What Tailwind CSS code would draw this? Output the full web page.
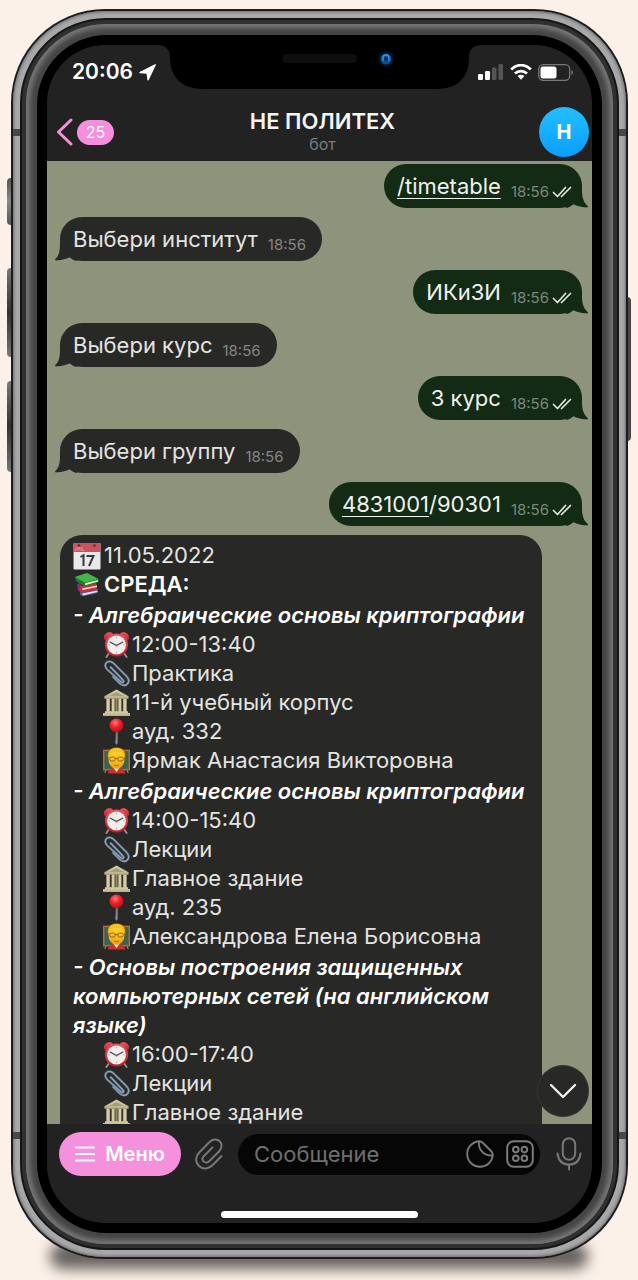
<!DOCTYPE html>
<html lang="ru">
<head>
<meta charset="utf-8">
<meta name="viewport" content="width=device-width, initial-scale=1">
<title>НЕ ПОЛИТЕХ</title>
<script src="https://cdn.jsdelivr.net/npm/@tailwindcss/browser@4"></script>
</head>
<body class="bg-[#fbf1e8] font-['Inter','Liberation_Sans',sans-serif]">

<!-- Shared glyphs -->
<svg class="absolute size-0" aria-hidden="true">
  <defs>
    <linearGradient id="redShade" x1="0" y1="0" x2="0" y2="1"><stop offset="0" stop-color="#f0555e"/><stop offset="1" stop-color="#b81f2c"/></linearGradient>
    <linearGradient id="stone" x1="0" y1="0" x2="0" y2="1"><stop offset="0" stop-color="#d9d0ab"/><stop offset="1" stop-color="#b9ae86"/></linearGradient>
    <radialGradient id="pinHead" cx="0.4" cy="0.3" r="0.7"><stop offset="0" stop-color="#ff7a74"/><stop offset="0.5" stop-color="#ee2228"/><stop offset="1" stop-color="#b50d16"/></radialGradient>
    <linearGradient id="face" x1="0" y1="0" x2="0" y2="1"><stop offset="0" stop-color="#ffd93a"/><stop offset="1" stop-color="#f2a30c"/></linearGradient>
  </defs>
  <symbol id="tailLeft" viewBox="0 0 22 22">
    <path d="M5 0V5C5 12 4 17 0 20.500C-.5 21.500 1 21.500 3 21.300C7 21 11 20 14.500 18.200C17 20 19 21.500 22 22V0Z"/>
  </symbol>
  <symbol id="tailRight" viewBox="0 0 22 22">
    <path d="M16 0V5C16 12 18 17 22 20.500C22.500 21.500 21 21.500 19 21.300C15 21 11 20 7.500 18.200C5 20 3 21.500 0 22V0Z"/>
  </symbol>
  <symbol id="checks" viewBox="0 0 20 12">
    <path d="M1.500 6.500L5.500 10.500L13.500 1.500M9.500 10.500L18.500 1.500" fill="none" stroke="currentColor" stroke-width="1.700" stroke-linecap="round" stroke-linejoin="round"/>
  </symbol>
  <symbol id="calendar" viewBox="0 0 28 28">
    <rect x="0.500" y="1" width="27" height="26.500" rx="1" fill="#e9e8ec"/>
    <path d="M.5 10V2A1 1 0 0 1 1.500 1H26.500A1 1 0 0 1 27.500 2V10Z" fill="#c5545d"/>
    <circle cx="6" cy="3.500" r="1.300" fill="#6e2a31"/><circle cx="21.500" cy="3.500" r="1.300" fill="#6e2a31"/>
    <path d="M3 5V8.500H2M5 8.500V5.500H7V8.500M9 5V8.500H11" fill="none" stroke="#e79aa0" stroke-width="0.900"/>
    <path d="M7.500 15L10.500 13.200V24M13.500 14H20.500L16 24" fill="none" stroke="#3b3b3f" stroke-width="2"/>
  </symbol>
  <symbol id="books" viewBox="0 0 28 28">
    <path d="M7 20L24 17.500L25 22L10 25.500L7 24Z" fill="#4a5a9c"/>
    <path d="M9 22.500L24.500 19.500V21L10 24.500Z" fill="#dfe3f0"/>
    <path d="M4 13L7 12L9 15.500L23 13V18L9 21.500L5 20Z" fill="#7a2f8a"/>
    <path d="M7 15L23 12L24.500 18.500L9.500 21.500L6.500 20Z" fill="#cf2d33"/>
    <path d="M9 17.500L24 14.500V16L9.500 19Z" fill="#f1e6e6"/>
    <path d="M2 6L14 2L25.500 8V11.500L11.500 15.500L3 10Z" fill="#1e7d2d"/>
    <path d="M2 6L14 2L25.500 8L12 11.500Z" fill="#43b649"/>
    <path d="M12 12.300L25 9V10.500L12 14.300Z" fill="#e6efe4"/>
  </symbol>
  <symbol id="clock" viewBox="0 0 28 28">
    <path d="M6.500 22.500L3.500 27M21.500 22.500L24.500 27" stroke="#8d8d92" stroke-width="2" stroke-linecap="round"/>
    <path d="M1.500 9C-.5 5 3.500 0 8.500 1.500C10 2 10.500 3 10 3.500L3.500 9.500C3 10 2 10 1.500 9Z" fill="url(#redShade)"/>
    <path d="M26.500 9C28.500 5 24.500 0 19.500 1.500C18 2 17.500 3 18 3.500L24.500 9.500C25 10 26 10 26.500 9Z" fill="url(#redShade)"/>
    <circle cx="14" cy="14.500" r="12" fill="url(#redShade)"/>
    <circle cx="14" cy="14.500" r="9.800" fill="#f1efee"/>
    <path d="M7.500 11.500L14 15L20.500 11.500" fill="none" stroke="#55555a" stroke-width="1.300" stroke-linecap="round"/>
    <path d="M14 6.200V7.500M14 21.500V22.800M5.700 14.500H7M21 14.500H22.300" stroke="#9a9a9e"/>
    <circle cx="14" cy="15" r="1" fill="#c94a50"/>
  </symbol>
  <symbol id="clipEmoji" viewBox="0 0 28 28">
    <g fill="none" stroke-linecap="round" stroke-linejoin="round">
      <path d="M8 7.500L20.500 20.500C22.500 22.500 20.500 24.500 18.500 22.500L4.500 10C-1 4.500 5.500-1.500 11 3.500L24 16.500C30 22.500 24 29.500 17.500 24.500L10.500 17.500" stroke="#526577" stroke-width="2.600"/>
      <path d="M8 7.500L20.500 20.500C22.500 22.500 20.500 24.500 18.500 22.500L4.500 10C-1 4.500 5.500-1.500 11 3.500L24 16.500C30 22.500 24 29.500 17.500 24.500L10.500 17.500" stroke="#8fa5b8" stroke-width="1.300"/>
    </g>
  </symbol>
  <symbol id="bank" viewBox="0 0 28 28">
    <path d="M4 10H24V24H4Z" fill="#3a3629"/>
    <path d="M14 0.500L26.500 7.500V10H1.500V7.500Z" fill="url(#stone)"/>
    <path d="M14 3L21.500 7.300H6.500Z" fill="#a89d78"/>
    <path d="M3.500 10H7V23.500H3.500ZM9 10H12V23.500H9ZM16 10H19V23.500H16ZM21 10H24.500V23.500H21Z" fill="#d6cda6"/>
    <path d="M12.800 10H15.200V23.500H12.800Z" fill="#8e8563"/>
    <path d="M2 23H26V25H28V28H0V25H2Z" fill="url(#stone)"/>
  </symbol>
  <symbol id="pin" viewBox="0 0 28 28">
    <path d="M14 11L13.200 26L14 27.500L14.800 26V11Z" fill="#8c8f95" stroke="#8c8f95" stroke-width="0.700"/>
    <path d="M10.500 12H17.500L16.500 14.500H11.500Z" fill="#b5121b"/>
    <circle cx="14" cy="7.700" r="7.200" fill="url(#pinHead)"/>
  </symbol>
  <symbol id="teacher" viewBox="0 0 28 28">
    <rect x="0.700" y="3.500" width="26.600" height="20" fill="#41604f" stroke="#a0733f" stroke-width="1.600"/>
    <path d="M3 24L2 27M25 24L26 27" stroke="#a0733f" stroke-width="1.500"/>
    <path d="M5 27.500C5.500 23 9 22 14 22S22.500 23 23 27.500Z" fill="#d22c2f"/>
    <path d="M10.500 21H17.500L14 26Z" fill="#f1efe9"/>
    <path d="M5 11C4 4 8 0.500 14 .5S24 4 23 11Z" fill="#d99b10"/>
    <ellipse cx="14" cy="12.500" rx="8.300" ry="10.300" fill="url(#face)"/>
    <path d="M5.500 10C6 3 9.500 1 14 1S22 3 22.500 10C20 8 19 5.500 17 5C13 6 9 5 8 7C7.500 8.500 6.500 9 5.500 10Z" fill="#f7c21a"/>
    <g fill="none" stroke="#8a5a10" stroke-width="0.900"><rect x="7" y="10.500" width="5.500" height="4" rx="1.500"/><rect x="15.500" y="10.500" width="5.500" height="4" rx="1.500"/><path d="M12.500 12H15.500M11.500 18.500C13 19.500 15 19.500 16.500 18.500"/></g>
  </symbol>
</svg>

<main class="relative h-screen pl-[11px] pr-[10px] pt-[9px] pb-[21px]">
  <!-- Phone side keys -->
  <div class="absolute left-[7px] top-[178px] h-[47px] w-[6px] rounded-l-sm bg-linear-to-b from-[#555] via-[#8a8a8a] to-[#555]"></div>
  <div class="absolute left-[7px] top-[268px] h-[89px] w-[6px] rounded-l-sm bg-linear-to-b from-[#777] via-[#333] to-[#777]"></div>
  <div class="absolute left-[7px] top-[381px] h-[91px] w-[6px] rounded-l-sm bg-linear-to-b from-[#777] via-[#333] to-[#777]"></div>
  <div class="absolute right-[7px] top-[297px] h-[144px] w-[5px] rounded-r-sm bg-[#4e4648]"></div>
  <!-- Ground shadow -->
  <div class="absolute inset-x-[50px] bottom-[11px] h-[26px] rounded-full bg-black/60 blur-[7px]"></div>

  <!-- Phone body, from the outer edge inwards -->
  <div class="relative h-full rounded-[94px] bg-[#1c1c1c] p-[2px]">
    <div class="relative h-full rounded-[92px] bg-[#a8a7a9] p-[7px] shadow-[inset_0_0_3px_1px_#6d6d6e]">
      <div class="absolute inset-x-0 top-[118px] flex h-[7px] justify-between"><span class="w-[8px] bg-[#48484a]"></span><span class="w-[8px] bg-[#48484a]"></span></div>
      <div class="absolute inset-x-0 bottom-[118px] flex h-[7px] justify-between"><span class="w-[8px] bg-[#48484a]"></span><span class="w-[8px] bg-[#48484a]"></span></div>
      <div class="relative h-full rounded-[86px] border-2 border-[#161616] bg-[#303030] p-[4px]">
        <div class="h-full rounded-[80px] bg-[#454546] p-[11px] shadow-[inset_0_0_5px_4px_#777778]">
          <div class="h-full rounded-[70px] bg-black p-[10px]">

            <!-- Screen -->
            <div class="relative flex h-full flex-col overflow-hidden rounded-[58px] bg-[#222222]">
              <svg class="absolute left-1/2 top-0 h-[45px] w-[326px] -translate-x-1/2" viewBox="0 0 326 45" aria-hidden="true">
                <path d="M0 0C9 0 13 4 13 13C13 32 25 44 46 44H280C301 44 312 32 312 13C312 4 316 0 326 0Z" fill="#000"/>
                <rect x="125" y="9" width="75" height="9" rx="4.500" fill="#0e0e0f"/>
                <circle cx="229" cy="14" r="8" fill="#04101c"/>
                <circle cx="229" cy="14" r="5.500" fill="#0a4f92"/>
                <path d="M226 16V13A3 3 0 0 1 232 13V16" fill="none" stroke="#2f9af0" stroke-width="1.300"/>
                <circle cx="229" cy="14" r="1.800" fill="#06203d"/>
              </svg>

              <header class="relative">
                <div class="flex h-[54px] items-center justify-between pl-[25px] pr-[18px] text-white">
                  <div class="flex items-center gap-1.5 text-[21px] font-semibold leading-7">
                    <span>20:06</span>
                    <svg class="size-[17px]" viewBox="0 0 18 18" aria-hidden="true"><path d="M17.200 .8L9.600 16.800L8.600 9.700L1 9Z" fill="#fff" stroke="#fff" stroke-width="1.400" stroke-linejoin="round"/></svg>
                  </div>
                  <div class="flex items-center gap-[6px]">
                    <svg class="h-4 w-[26px]" viewBox="0 0 26 16" aria-hidden="true"><rect y="10" width="5" height="6" rx="1.200" fill="#fff"/><rect x="7" y="7" width="5" height="9" rx="1.200" fill="#fff"/><rect x="14" y="3.500" width="4.500" height="12.500" rx="1.200" fill="#555"/><rect x="20.500" width="4.500" height="16" rx="1.200" fill="#555"/></svg>
                    <svg class="h-4 w-[22px]" viewBox="0 0 22 16" aria-hidden="true"><g fill="none" stroke="#fff" stroke-width="2.800"><path d="M1.200 5.500C7-0.300 15-0.300 20.800 5.500"/><path d="M5 9.500C8.500 6.200 13.500 6.200 17 9.500"/></g><path d="M7.600 12C9.500 10.400 12.500 10.400 14.400 12L11 15.800Z" fill="#fff"/></svg>
                    <svg class="h-[17px] w-[36px]" viewBox="0 0 36 17" aria-hidden="true"><rect x="0.700" y="0.700" width="31" height="15.600" rx="4.500" fill="none" stroke="#777" stroke-width="1.300"/><rect x="2.500" y="2.500" width="16" height="12" rx="2.500" fill="#fff"/><path d="M33.500 6C35.500 6.800 35.500 10.200 33.500 11Z" fill="#777"/></svg>
                  </div>
                </div>
                <div class="mt-1 flex h-[58px] items-center justify-between pl-[9px] pr-[3px]">
                  <button class="flex w-[60px] items-center gap-1" aria-label="Назад">
                    <svg class="h-7 w-[17px]" viewBox="0 0 17 28" aria-hidden="true"><path d="M15 2L2.500 14L15 26" fill="none" stroke="#f58fdd" stroke-width="3" stroke-linecap="round" stroke-linejoin="round"/></svg>
                    <span class="flex h-[25px] w-[37px] items-center justify-center rounded-full bg-[#f58fdd] text-[16px] leading-5 text-white">25</span>
                  </button>
                  <div class="pb-0.5 text-center">
                    <h1 class="text-[22px] font-semibold leading-[26px] text-[#f5f5f5]">НЕ ПОЛИТЕХ</h1>
                    <p class="text-[16px] leading-5 text-[#7d7d7d]">бот</p>
                  </div>
                  <div class="flex w-[60px] justify-end">
                    <span class="flex size-[50px] items-center justify-center rounded-full bg-linear-to-b from-[#23bfff] to-[#0a9eff] text-[20px] font-bold text-white">Н</span>
                  </div>
                </div>
              </header>

              <!-- Conversation -->
              <section class="relative min-h-0 flex-1 overflow-hidden bg-[#8e937b]">
                <ol class="flex flex-col gap-[9px] pl-[13px] pr-[10px] pt-[3px] text-[22px] text-[#e4e4e2]">
                  <li class="relative flex h-11 items-center gap-[10px] self-end rounded-[22px] bg-[#132a15] pl-[13px] pr-[10px] text-[#eef2ec]">
                    <svg class="absolute -right-[6px] bottom-0 size-[22px] fill-[#132a15]" aria-hidden="true"><use href="#tailRight"/></svg>
                    <a href="#" class="relative underline decoration-1 underline-offset-4">/timetable</a>
                    <span class="relative flex items-center gap-[3px] pt-3 text-[15px] leading-5 text-[#7a8a7a]"><time>18:56</time><svg class="h-3 w-5 text-[#dfe6dd]" aria-hidden="true"><use href="#checks"/></svg></span>
                  </li>
                  <li class="relative flex h-11 items-center gap-[10px] self-start rounded-[22px] bg-[#282826] pl-[13px] pr-4">
                    <svg class="absolute -left-[5px] bottom-0 size-[22px] fill-[#282826]" aria-hidden="true"><use href="#tailLeft"/></svg>
                    <span class="relative">Выбери институт</span>
                    <time class="pt-3 text-[15px] leading-5 text-[#858583]">18:56</time>
                  </li>
                  <li class="relative flex h-11 items-center gap-[10px] self-end rounded-[22px] bg-[#132a15] pl-[13px] pr-[10px] text-[#eef2ec]">
                    <svg class="absolute -right-[6px] bottom-0 size-[22px] fill-[#132a15]" aria-hidden="true"><use href="#tailRight"/></svg>
                    <span>ИКиЗИ</span>
                    <span class="relative flex items-center gap-[3px] pt-3 text-[15px] leading-5 text-[#7a8a7a]"><time>18:56</time><svg class="h-3 w-5 text-[#dfe6dd]" aria-hidden="true"><use href="#checks"/></svg></span>
                  </li>
                  <li class="relative flex h-11 items-center gap-[10px] self-start rounded-[22px] bg-[#282826] pl-[13px] pr-4">
                    <svg class="absolute -left-[5px] bottom-0 size-[22px] fill-[#282826]" aria-hidden="true"><use href="#tailLeft"/></svg>
                    <span class="relative">Выбери курс</span>
                    <time class="pt-3 text-[15px] leading-5 text-[#858583]">18:56</time>
                  </li>
                  <li class="relative flex h-11 items-center gap-[10px] self-end rounded-[22px] bg-[#132a15] pl-[13px] pr-[10px] text-[#eef2ec]">
                    <svg class="absolute -right-[6px] bottom-0 size-[22px] fill-[#132a15]" aria-hidden="true"><use href="#tailRight"/></svg>
                    <span>3 курс</span>
                    <span class="relative flex items-center gap-[3px] pt-3 text-[15px] leading-5 text-[#7a8a7a]"><time>18:56</time><svg class="h-3 w-5 text-[#dfe6dd]" aria-hidden="true"><use href="#checks"/></svg></span>
                  </li>
                  <li class="relative flex h-11 items-center gap-[10px] self-start rounded-[22px] bg-[#282826] pl-[13px] pr-4">
                    <svg class="absolute -left-[5px] bottom-0 size-[22px] fill-[#282826]" aria-hidden="true"><use href="#tailLeft"/></svg>
                    <span class="relative">Выбери группу</span>
                    <time class="pt-3 text-[15px] leading-5 text-[#858583]">18:56</time>
                  </li>
                  <li class="relative flex h-11 items-center gap-[10px] self-end rounded-[22px] bg-[#132a15] pl-[13px] pr-[10px] text-[#eef2ec]">
                    <svg class="absolute -right-[6px] bottom-0 size-[22px] fill-[#132a15]" aria-hidden="true"><use href="#tailRight"/></svg>
                    <span><a href="#" class="underline decoration-1 underline-offset-4">4831001</a>/90301</span>
                    <span class="relative flex items-center gap-[3px] pt-3 text-[15px] leading-5 text-[#7a8a7a]"><time>18:56</time><svg class="h-3 w-5 text-[#dfe6dd]" aria-hidden="true"><use href="#checks"/></svg></span>
                  </li>

                  <!-- Timetable -->
                  <li class="flex max-w-[482px] flex-col gap-0.5 self-start rounded-[22px] bg-[#282826] px-[13px] pb-10 pt-1.5 leading-[29px]">
                    <div>
                      <p class="flex items-center gap-[3px]"><svg class="size-7" aria-hidden="true"><use href="#calendar"/></svg>11.05.2022</p>
                      <p class="flex items-center gap-[3px] font-semibold text-white"><svg class="size-7" aria-hidden="true"><use href="#books"/></svg>СРЕДА:</p>
                    </div>
                    <div>
                      <h2 class="font-semibold italic text-white">- Алгебраические основы криптографии</h2>
                      <ul class="pl-[30px]">
                        <li class="flex items-center gap-[2px]"><svg class="size-[27px]" aria-hidden="true"><use href="#clock"/></svg>12:00-13:40</li>
                        <li class="flex items-center gap-[2px]"><svg class="size-[27px]" aria-hidden="true"><use href="#clipEmoji"/></svg>Практика</li>
                        <li class="flex items-center gap-[2px]"><svg class="size-[27px]" aria-hidden="true"><use href="#bank"/></svg>11-й учебный корпус</li>
                        <li class="flex items-center gap-[2px]"><svg class="size-[27px]" aria-hidden="true"><use href="#pin"/></svg>ауд. 332</li>
                        <li class="flex items-center gap-[2px]"><svg class="size-[27px]" aria-hidden="true"><use href="#teacher"/></svg>Ярмак Анастасия Викторовна</li>
                      </ul>
                    </div>
                    <div>
                      <h2 class="font-semibold italic text-white">- Алгебраические основы криптографии</h2>
                      <ul class="pl-[30px]">
                        <li class="flex items-center gap-[2px]"><svg class="size-[27px]" aria-hidden="true"><use href="#clock"/></svg>14:00-15:40</li>
                        <li class="flex items-center gap-[2px]"><svg class="size-[27px]" aria-hidden="true"><use href="#clipEmoji"/></svg>Лекции</li>
                        <li class="flex items-center gap-[2px]"><svg class="size-[27px]" aria-hidden="true"><use href="#bank"/></svg>Главное здание</li>
                        <li class="flex items-center gap-[2px]"><svg class="size-[27px]" aria-hidden="true"><use href="#pin"/></svg>ауд. 235</li>
                        <li class="flex items-center gap-[2px]"><svg class="size-[27px]" aria-hidden="true"><use href="#teacher"/></svg>Александрова Елена Борисовна</li>
                      </ul>
                    </div>
                    <div>
                      <h2 class="font-semibold italic text-white">- Основы построения защищенных компьютерных сетей (на английском языке)</h2>
                      <ul class="pl-[30px]">
                        <li class="flex items-center gap-[2px]"><svg class="size-[27px]" aria-hidden="true"><use href="#clock"/></svg>16:00-17:40</li>
                        <li class="flex items-center gap-[2px]"><svg class="size-[27px]" aria-hidden="true"><use href="#clipEmoji"/></svg>Лекции</li>
                        <li class="flex items-center gap-[2px]"><svg class="size-[27px]" aria-hidden="true"><use href="#bank"/></svg>Главное здание</li>
                      </ul>
                    </div>
                  </li>
                </ol>
                <button class="absolute bottom-2 right-1 flex size-[50px] items-center justify-center rounded-full bg-[#282826] shadow-[0_0_0_1px_#333331]" aria-label="Вниз">
                  <svg class="h-4 w-7" viewBox="0 0 28 16" aria-hidden="true"><path d="M2 2L14 14L26 2" fill="none" stroke="#f2f2f2" stroke-width="2.400" stroke-linecap="round" stroke-linejoin="round"/></svg>
                </button>
              </section>

              <!-- Composer -->
              <footer class="pt-2">
                <div class="flex items-center pl-3 pr-[10px]">
                  <button class="flex h-11 w-[122px] items-center justify-center gap-[10px] rounded-full bg-[#f490dc] text-[20px] font-semibold text-white">
                    <svg class="h-4 w-5" viewBox="0 0 20 16" aria-hidden="true"><path d="M1 1.500H19M1 8H19M1 14.500H19" stroke="#fff" stroke-width="2.200" stroke-linecap="round"/></svg>Меню
                  </button>
                  <button class="ml-[13px]" aria-label="Прикрепить">
                    <svg class="h-8 w-[30px]" viewBox="0 0 30 32" fill="none" stroke="#777" stroke-width="2" stroke-linecap="round" stroke-linejoin="round" aria-hidden="true"><path d="M27.500 18L19 26.700C15 30.800 9 32 5 28C1 24 1.300 18.500 5 14.700L15.500 4C18.500 1 23 .5 25.700 3.300C28.500 6 28 10.300 25.200 13.200L15.300 23.200C13.500 25 11 25 9.500 23.400C8 21.800 8.300 19.700 10 18L18.500 9.400"/></svg>
                  </button>
                  <div class="ml-[14px] flex h-[41px] min-w-0 flex-1 items-center gap-3 rounded-full bg-[#060606] pl-4 pr-[6px]">
                    <input type="text" aria-label="Сообщение" placeholder="Сообщение" class="min-w-0 flex-1 bg-transparent text-[22px] text-white outline-none placeholder:text-[#6f6f6f]">
                    <button aria-label="Стикеры">
                      <svg class="size-7" viewBox="0 0 28 28" fill="none" stroke="#7b7b7b" stroke-width="1.900" stroke-linejoin="round" aria-hidden="true"><path d="M13.500 1.200A12.800 12.800 0 1 0 26.800 14.500C26.800 13 26 12 25 11L17 3C16 2 15 1.200 13.500 1.200Z"/><path d="M13 1.500C12 9 17 15.500 26.500 15.500"/></svg>
                    </button>
                    <button aria-label="Команды">
                      <svg class="size-7" viewBox="0 0 28 28" fill="none" stroke="#7b7b7b" stroke-width="2" aria-hidden="true"><rect x="1.200" y="1.200" width="25.600" height="25.600" rx="6.500"/><circle cx="9.800" cy="9.600" r="2.800"/><circle cx="18.400" cy="9.600" r="2.800"/><circle cx="9.800" cy="18.200" r="2.800"/><circle cx="18.400" cy="18.200" r="2.800"/></svg>
                    </button>
                  </div>
                  <button class="ml-4" aria-label="Голосовое сообщение">
                    <svg class="h-[34px] w-[26px]" viewBox="0 0 26 34" fill="none" stroke="#777" stroke-width="2" stroke-linecap="round" aria-hidden="true"><rect x="6.800" y="1.200" width="12.400" height="21.600" rx="6.200"/><path d="M1.500 16.500C2.500 24 7 27.500 13 27.500S23.500 24 24.500 16.500M13 27.500V32.500"/></svg>
                  </button>
                </div>
                <div class="mx-auto mb-[5px] mt-[35px] h-[7px] w-[197px] rounded-full bg-white"></div>
              </footer>
            </div>
          </div>
        </div>
      </div>
    </div>
  </div>
</main>
</body>
</html>
